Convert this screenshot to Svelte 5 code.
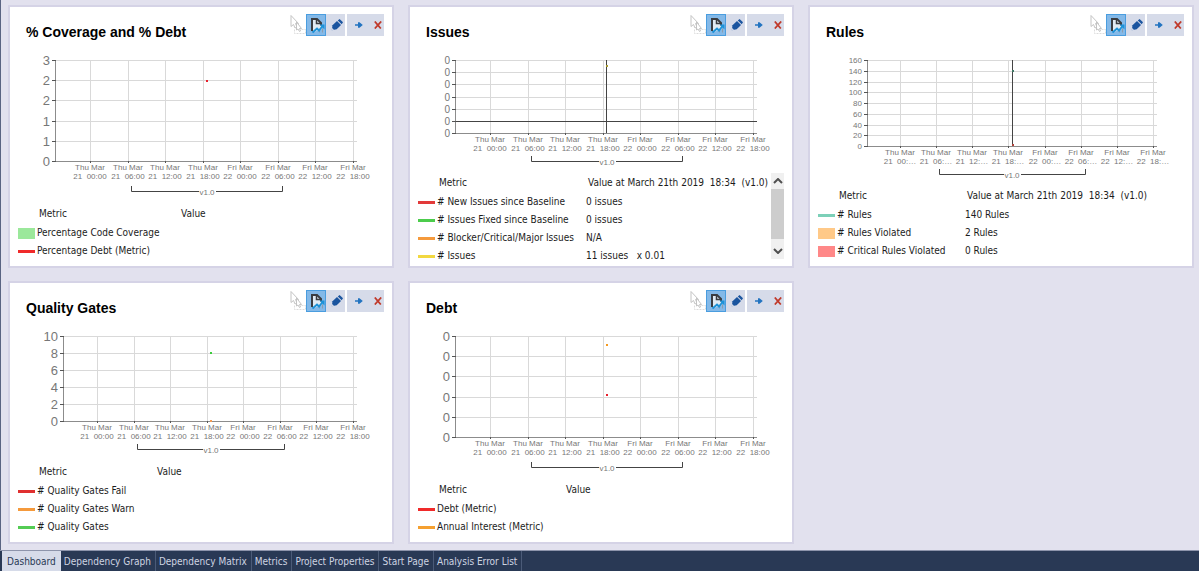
<script lang="ts">
  type Mark = { x: number; y: number; color: string };
  type Metric = { name: string; value?: string; color: string; area?: boolean };
  type Chart = {
    title: string;
    height: number;
    axis: number;
    bottom: number;
    yLabels: string[];
    labelSize: 'large' | 'medium' | 'small';
    first: number;
    short?: boolean;
    marks: Mark[];
    cursor?: number;
    zeroLine?: number;
    versionGap: number;
    valueTitle: string;
    nameWidth: number;
    metrics: Metric[];
    scroll?: boolean;
  };

  const selection = 'Value at March 21th 2019\u00a0 18:34\u00a0 (v1.0)';
  const chartRight = 347;
  const lastTick = 343;

  const charts: Chart[] = [
    {
      title: '% Coverage and % Debt',
      height: 154,
      axis: 46,
      bottom: 111,
      yLabels: ['3', '2', '2', '1', '1', '0'],
      labelSize: 'large',
      first: 80,
      marks: [{ x: 197, y: 31, color: '#e8202c' }],
      versionGap: 30,
      valueTitle: 'Value',
      nameWidth: 140,
      metrics: [
        { name: 'Percentage Code Coverage', color: '#9be89b', area: true },
        { name: 'Percentage Debt (Metric)', color: '#f02a2a' }
      ]
    },
    {
      title: 'Issues',
      height: 123,
      axis: 46,
      bottom: 83,
      yLabels: ['0', '0', '0', '0', '0', '0', '0'],
      labelSize: 'medium',
      first: 80,
      marks: [{ x: 197, y: 16, color: '#a89a30' }],
      cursor: 197,
      zeroLine: 71,
      versionGap: 28,
      valueTitle: selection,
      nameWidth: 147,
      metrics: [
        { name: '# New Issues since Baseline', value: '0 issues', color: '#e23a3a' },
        { name: '# Issues Fixed since Baseline', value: '0 issues', color: '#4ccc4c' },
        { name: '# Blocker/Critical/Major Issues', value: 'N/A', color: '#f59a3c' },
        { name: '# Issues', value: '11 issues\u00a0\u00a0 x 0.01', color: '#f2d840' }
      ],
      scroll: true
    },
    {
      title: 'Rules',
      height: 136,
      axis: 58,
      bottom: 96,
      yLabels: ['160', '140', '120', '100', '80', '60', '40', '20', '0'],
      labelSize: 'small',
      first: 90,
      short: true,
      marks: [
        { x: 203, y: 21, color: '#3f7866' },
        { x: 203, y: 95, color: '#b0443c' }
      ],
      cursor: 203,
      versionGap: 28,
      valueTitle: selection,
      nameWidth: 126,
      metrics: [
        { name: '# Rules', value: '140 Rules', color: '#7cd0b8' },
        { name: '# Rules Violated', value: '2 Rules', color: '#ffc988', area: true },
        { name: '# Critical Rules Violated', value: '0 Rules', color: '#ff8888', area: true }
      ]
    },
    {
      title: 'Quality Gates',
      height: 136,
      axis: 54,
      bottom: 95,
      yLabels: ['10', '8', '6', '4', '2', '0'],
      labelSize: 'large',
      first: 87,
      marks: [
        { x: 201, y: 27, color: '#3ccc3c' },
        { x: 201, y: 95, color: '#f59a50' }
      ],
      versionGap: 28,
      valueTitle: 'Value',
      nameWidth: 116,
      metrics: [
        { name: '# Quality Gates Fail', color: '#e03030' },
        { name: '# Quality Gates Warn', color: '#f59a3c' },
        { name: '# Quality Gates', color: '#54cc54' }
      ]
    },
    {
      title: 'Debt',
      height: 154,
      axis: 46,
      bottom: 111,
      yLabels: ['0', '0', '0', '0', '0', '0'],
      labelSize: 'large',
      first: 80,
      marks: [
        { x: 197, y: 19, color: '#f59a20' },
        { x: 197, y: 69, color: '#e8202c' }
      ],
      versionGap: 30,
      valueTitle: 'Value',
      nameWidth: 125,
      metrics: [
        { name: 'Debt (Metric)', color: '#f02a2a' },
        { name: 'Annual Interest (Metric)', color: '#f5a030' }
      ]
    }
  ];

  const days = ['Thu Mar', 'Thu Mar', 'Thu Mar', 'Thu Mar', 'Fri Mar', 'Fri Mar', 'Fri Mar', 'Fri Mar'];
  const dates = ['21', '21', '21', '21', '22', '22', '22', '22'];
  const hours = ['00', '06', '12', '18', '00', '06', '12', '18'];

  const tabs = [
    'Dashboard',
    'Dependency Graph',
    'Dependency Matrix',
    'Metrics',
    'Project Properties',
    'Start Page',
    'Analysis Error List'
  ];
  let activeTab = $state('Dashboard');

  const top = 10;

  function tickX(chart: Chart, i: number) {
    return Math.round(chart.first + ((lastTick - chart.first) * i) / 7);
  }

  function tickY(chart: Chart, i: number) {
    return Math.round(top + ((chart.bottom - top) * i) / (chart.yLabels.length - 1));
  }

  // the version bracket starts just after the second tick and spans four of them
  function bracket(chart: Chart) {
    const start = tickX(chart, 1) + 3;
    const end = tickX(chart, 5) + 4;
    return { start, end, mid: Math.round((start + end) / 2), y: chart.bottom + chart.versionGap };
  }
</script>

<div class="app">
  <main class="dashboard">
    {#each charts as chart}
      {@const b = bracket(chart)}
      <section class="card">
        <header>
          <h2>{chart.title}</h2>
          <div class="toolbar">
            <button type="button" class="pick" aria-label="Select">
              <svg width="16" height="22" viewBox="0 0 16 22" fill="none" stroke="#c4c4c4">
                <path d="M4.500 15.500v4h11v-4h-4" stroke="#dcdcdc" stroke-dasharray="2 1" />
                <path d="M1 1.500v11l2.500-2 1.500 3.500 2-1-1.500-3.500h3z" fill="#fff" />
                <path d="M6.500 8v8l1.500-1 1.500 2.500 1-.5-1-2.500h2z" fill="#fff" />
              </svg>
            </button>
            <button type="button" class="active" aria-label="Show chart">
              <svg width="18" height="20" viewBox="0 0 18 20" fill="none">
                <path d="M5 15V4h5l5 5v5l-8 3z" fill="#dfeaf4" />
                <path d="M5 16V4h5l4 4v2.500" stroke="#3a3d42" stroke-width="2" />
                <path d="M9.500 4v4.500H14" stroke="#3a3d42" stroke-width="1.500" />
                <path d="M12.500 17.500v-3M15.500 17.500v-4" stroke="#8d9cad" />
                <path d="M5.500 17.500l4.500-4 2 2 4-5" stroke="#1d92d8" stroke-width="2" />
                <path d="M12.500 9.500H17.500v5z" fill="#1d92d8" />
              </svg>
            </button>
            <button type="button" class="edit" aria-label="Edit">
              <svg width="12" height="12" viewBox="0 0 12 12">
                <path d="M.8 11.200l.7-5L6 2l4 4-4.300 4.200z" fill="#1b559f" />
                <path d="M6.800 1.400L8.600 0 12 3.200l-1.300 2z" fill="#1b559f" />
                <path d="M.8 11.200l.4-2.200 1.800 1.800z" fill="#d6dbe9" />
              </svg>
            </button>
            <button type="button" class="move" aria-label="Move right">
              <svg width="8" height="8" viewBox="0 0 8 8">
                <path d="M0 3.300h3V1.200h1.500L7.800 4 4.500 6.800H3V4.700H0z" fill="#2374c0" />
              </svg>
            </button>
            <button type="button" class="remove" aria-label="Remove">
              <svg width="8" height="8" viewBox="0 0 8 8">
                <path d="M.8.5l6 7M7.200.5l-6.400 7" stroke="#c03a2b" stroke-width="1.800" />
              </svg>
            </button>
          </div>
        </header>

        <svg class="chart" viewBox="0 0 382 {chart.height}" role="img" aria-label={chart.title}>
          <g class="grid">
            {#each chart.yLabels as _, i}
              <path d="M{chart.axis} {tickY(chart, i) + 0.5}H{chartRight}" />
            {/each}
            {#each days as _, i}
              <path d="M{tickX(chart, i) + 0.5} {top}V{chart.bottom}" />
            {/each}
          </g>
          <g class="axis">
            <path d="M{chart.axis - 0.5} {top}V{chart.bottom + 1}" />
            <path d="M{chart.axis} {chart.bottom + 0.5}H{chartRight}" />
          </g>
          <g class="ticks">
            {#each chart.yLabels as _, i}
              <path d="M{chart.axis - 4} {tickY(chart, i) + 0.5}h4" />
            {/each}
            {#each days as _, i}
              <path d="M{tickX(chart, i) + 0.5} {chart.bottom}v2" />
            {/each}
          </g>
          <g class="y-labels {chart.labelSize}">
            {#each chart.yLabels as label, i}
              <text x={chart.axis - 6} y={tickY(chart, i)} dy="0.36em">{label}</text>
            {/each}
          </g>
          <g class="x-labels">
            {#each days as day, i}
              <text x={tickX(chart, i)} y={chart.bottom + 9}>{day}</text>
              <text x={tickX(chart, i)} y={chart.bottom + 18}>{dates[i]}&nbsp; {hours[i]}:{chart.short ? '…' : '00'}</text>
            {/each}
            <text x={b.mid} y={b.y + 4}>v1.0</text>
          </g>
          <path class="bracket" d="M{b.start + 0.5} {b.y - 5}v5.500H{b.mid - 8}M{b.mid + 9} {b.y + 0.5}H{b.end + 0.5}v-5.500" />
          {#if chart.zeroLine}
            <path class="cursor" d="M{chart.axis} {chart.zeroLine + 0.5}H{chartRight}" />
          {/if}
          {#if chart.cursor}
            <path class="cursor" d="M{chart.cursor - 0.5} {top}V{chart.bottom}" />
          {/if}
          {#each chart.marks as mark}
            <rect x={mark.x - 1} y={mark.y - 1} width="2" height="2" fill={mark.color} />
          {/each}
        </svg>

        <div class="legend">
          <table>
            <thead>
              <tr>
                <td></td>
                <th style="width: {chart.nameWidth}px">Metric</th>
                <th>{chart.valueTitle}</th>
              </tr>
            </thead>
            <tbody>
              {#each chart.metrics as metric}
                <tr>
                  <td class="key"><span class:area={metric.area} style="background: {metric.color}"></span></td>
                  <td>{metric.name}</td>
                  <td>{metric.value ?? ''}</td>
                </tr>
              {/each}
            </tbody>
          </table>
          {#if chart.scroll}
            <div class="scrollbar">
              <button type="button" aria-label="Scroll up">
                <svg width="10" height="6" viewBox="0 0 10 6"><path d="M1 5l4-4 4 4" /></svg>
              </button>
              <div class="thumb"></div>
              <button type="button" aria-label="Scroll down">
                <svg width="10" height="6" viewBox="0 0 10 6"><path d="M1 1l4 4 4-4" /></svg>
              </button>
            </div>
          {/if}
        </div>
      </section>
    {/each}
  </main>

  <nav class="tabs">
    {#each tabs as tab}
      <button type="button" class:active={activeTab === tab} onclick={() => (activeTab = tab)}>{tab}</button>
    {/each}
  </nav>
</div>

<style>
  :global(body) {
    margin: 0;
    background: #e2e1ee;
  }

  .app {
    min-height: 100vh;
    display: flex;
    flex-direction: column;
    font-family: 'DejaVu Sans Condensed', 'Noto Sans', sans-serif;
    font-size: 10px;
    color: #1c1c1c;
  }

  button {
    margin: 0;
    padding: 0;
    border: 0;
    background: transparent;
    font: inherit;
    color: inherit;
  }

  .dashboard {
    flex: 1;
    display: grid;
    grid-template-columns: repeat(3, minmax(0, 1fr));
    grid-auto-rows: 1fr;
    gap: 13px 14px;
    padding: 5px 5px 6px 7px;
    border-left: 1px solid #5a6482;
  }

  .card {
    display: flex;
    flex-direction: column;
    background: #fff;
    border: 2px solid #d5d3e6;
    padding-bottom: 1px;
  }

  header {
    height: 43px;
    display: flex;
    justify-content: space-between;
    align-items: flex-start;
    padding: 0 8px 0 16px;
    box-sizing: border-box;
  }

  h2 {
    margin: 16px 0 0;
    font: bold 14px/18px 'Liberation Sans', Arial, sans-serif;
    color: #000;
    white-space: nowrap;
  }

  .toolbar {
    display: flex;
    margin-top: 7px;
    height: 22px;
  }

  .toolbar button {
    display: flex;
    align-items: center;
    justify-content: center;
    background: #d6dbe9;
  }

  .toolbar .pick {
    width: 16px;
    background: transparent;
  }

  .toolbar .active {
    width: 20px;
    background: #84b9e8;
    border: 1px solid #4a9ddf;
    box-sizing: border-box;
  }

  .toolbar .edit {
    width: 19px;
    padding-left: 2px;
    box-sizing: border-box;
    margin-right: 2px;
  }

  .toolbar .move {
    width: 24px;
  }

  .toolbar .remove {
    width: 13px;
  }

  .chart {
    display: block;
    width: 100%;
    font-family: 'Liberation Sans', Arial, sans-serif;
  }

  .chart path {
    fill: none;
  }

  .grid path {
    stroke: #d9d9d9;
  }

  .axis path {
    stroke: #8c8c8c;
  }

  .ticks path {
    stroke: #555;
  }

  .cursor,
  .bracket {
    stroke: #444;
  }

  .y-labels {
    fill: #777;
    text-anchor: end;
  }

  .large {
    font-size: 13px;
  }

  .medium {
    font-size: 10px;
  }

  .small {
    font-size: 8px;
  }

  .x-labels {
    font-size: 8px;
    fill: #777;
    text-anchor: middle;
  }

  .legend {
    display: flex;
    align-items: flex-start;
    justify-content: space-between;
    padding: 0 8px;
  }

  table {
    border-collapse: collapse;
    line-height: 12px;
    white-space: nowrap;
  }

  th,
  td {
    height: 18px;
    padding: 0;
    font-weight: normal;
    text-align: left;
  }

  th {
    height: 20px;
    padding-left: 2px;
  }

  .key {
    width: 19px;
  }

  .key span {
    display: block;
    width: 17px;
    height: 3px;
  }

  .key .area {
    height: 11px;
  }

  .scrollbar {
    width: 13px;
    height: 86px;
    display: flex;
    flex-direction: column;
    background: #f0f0f0;
  }

  .scrollbar button {
    height: 16px;
    display: flex;
    align-items: center;
    justify-content: center;
  }

  .scrollbar path {
    fill: none;
    stroke: #505050;
    stroke-width: 2;
  }

  .thumb {
    height: 50px;
    background: #cdcdcd;
    margin-bottom: 4px;
  }

  .tabs {
    height: 21px;
    display: flex;
    padding-left: 2px;
    background: #293955;
    border-top: 1px solid #8d94ab;
    box-sizing: border-box;
  }

  .tabs button {
    padding: 0 4px 0 3px;
    border-right: 1px solid #4b5b78;
    color: #ced4e2;
    white-space: nowrap;
  }

  .tabs .active {
    padding: 0 5px;
    border-right: 0;
    background: #d6dbe9;
    color: #293955;
  }
</style>
